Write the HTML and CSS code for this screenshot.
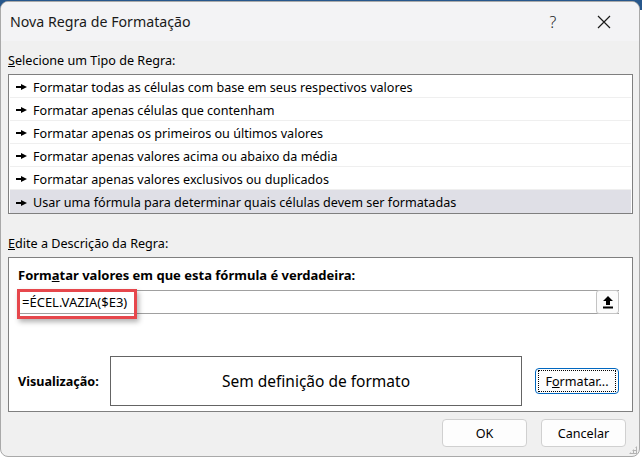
FILE: index.html
```html
<!DOCTYPE html>
<html lang="pt">
<head>
    <meta charset="UTF-8">
    <title>Nova Regra de Formatação</title>
    <link rel="stylesheet" href="styles.css">
</head>
<body>
    <div class="window">
        <div class="titlebar">
            <span class="title">Nova Regra de Formatação</span>
            <span class="help">?</span>
            <span class="close">
                <svg width="14" height="14" viewBox="0 0 14 14"><path d="M1 1L13 13M13 1L1 13" stroke="#1a1a1a" stroke-width="1.2"/></svg>
            </span>
        </div>

        <div class="content">
            <div class="group-label"><u>S</u>elecione um Tipo de Regra:</div>
            <ul class="rule-list">
                <li><span class="pointer"></span>Formatar todas as células com base em seus respectivos valores</li>
                <li><span class="pointer"></span>Formatar apenas células que contenham</li>
                <li><span class="pointer"></span>Formatar apenas os primeiros ou últimos valores</li>
                <li><span class="pointer"></span>Formatar apenas valores acima ou abaixo da média</li>
                <li><span class="pointer"></span>Formatar apenas valores exclusivos ou duplicados</li>
                <li class="selected"><span class="pointer"></span>Usar uma fórmula para determinar quais células devem ser formatadas</li>
            </ul>

            <div class="group-label second"><u>E</u>dite a Descrição da Regra:</div>
            <div class="desc-box">
                <div class="desc-title">Form<u>a</u>tar valores em que esta fórmula é verdadeira:</div>
                <div class="formula-field">
                    <span class="formula-text">=ÉCEL.VAZIA($E3)</span>
                    <span class="ref-btn">
                        <svg width="10" height="13" viewBox="0 0 10 13"><path d="M5 0L10 5H7V9H3V5H0Z" fill="#000"/><rect x="0" y="10.5" width="10" height="2" fill="#000"/></svg>
                    </span>
                    <div class="highlight"></div>
                </div>
                <div class="preview-row">
                    <span class="preview-label">Visualização:</span>
                    <div class="preview-box">Sem definição de formato</div>
                    <span class="btn format-btn"><span class="focus-ring">F<u>o</u>rmatar...</span></span>
                </div>
            </div>

            <div class="actions">
                <span class="btn">OK</span>
                <span class="btn">Cancelar</span>
            </div>
        </div>
        <div class="grip"></div>
    </div>
</body>
</html>
```

FILE: styles.css
```css
body {
    margin: 0;
    width: 642px;
    height: 458px;
    overflow: hidden;
    font-family: "Noto Sans", sans-serif;
    font-size: 12.6px;
    color: #000;
    background: linear-gradient(#27578c 0, #27578c 10px, #fff 10px);
}
.window {
    position: relative;
    width: 638px;
    height: 454px;
    margin-top: 1px;
    border: 1px solid #a9a9a9;
    border-radius: 8px;
    background-color: #f0f0f0;
    overflow: hidden;
}
.titlebar {
    display: flex;
    align-items: center;
    height: 39px;
    background-color: #f3f3f5;
}
.title {
    flex: 1;
    padding-left: 9px;
    font-size: 14.2px;
    color: #1a1a1a;
}
.help {
    width: 46px;
    text-align: center;
    font-size: 16px;
    font-weight: 300;
    color: #1a1a1a;
    margin-right: 5px;
}
.close {
    display: flex;
    justify-content: center;
    width: 46px;
    margin-right: 12px;
}
.content {
    padding: 0 6px 0 7px;
}
.group-label {
    line-height: 18px;
    margin-top: 11px;
}
.group-label.second {
    margin-top: 21px;
}
.rule-list {
    list-style: none;
    margin: 4px 0 0;
    padding: 0 1px;
    border: 1px solid #7f7f7f;
    box-shadow: inset 0 0 0 1px #fff;
    background-color: #fff;
}
.rule-list li {
    display: flex;
    align-items: center;
    box-sizing: border-box;
    height: 23px;
    padding-top: 2px;
    border-bottom: 1px solid #efefef;
    padding-left: 7px;
}
.rule-list li:last-child {
    border-bottom: 0;
}
.rule-list li.selected {
    background-color: #dfdfe6;
}
.pointer {
    width: 0;
    height: 0;
    border-top: 3px solid transparent;
    border-bottom: 3px solid transparent;
    border-left: 6px solid #000;
    margin-right: 6px;
    margin-left: 4px;
    position: relative;
}
.pointer::before {
    content: "";
    position: absolute;
    left: -11px;
    top: -1px;
    width: 5px;
    height: 2px;
    background-color: #000;
}
.desc-box {
    margin-top: 4px;
    height: 146px;
    padding: 7px 13px 0 9px;
    border: 1px solid #7f7f7f;
    background-color: #fff;
}
.desc-title {
    font-size: 13px;
    font-weight: bold;
    line-height: 18px;
    margin-top: 1px;
}
.formula-field {
    position: relative;
    display: flex;
    align-items: center;
    height: 22px;
    margin-top: 6px;
    border: 1px solid #a0a0a0;
    border-right: 0;
}
.formula-text {
    flex: 1;
    padding-left: 3px;
    font-size: 13px;
}
.ref-btn {
    display: flex;
    align-items: center;
    justify-content: center;
    width: 21px;
    height: 22px;
    border: 1px solid #c4c4c4;
    border-radius: 3px;
    background-color: #fbfbfb;
    margin-top: -1px;
    margin-bottom: -1px;
}
.highlight {
    position: absolute;
    left: -2px;
    top: -2px;
    width: 114px;
    height: 24px;
    border: 3px solid #e6474c;
    box-shadow: 2px 3px 5px rgba(0, 0, 0, 0.3);
}
.preview-row {
    display: flex;
    align-items: center;
    margin-top: 42px;
}
.preview-label {
    width: 92px;
    font-weight: bold;
}
.preview-box {
    width: 410px;
    height: 48px;
    border: 1px solid #646464;
    display: flex;
    align-items: center;
    justify-content: center;
    font-size: 15.5px;
}
.btn {
    display: flex;
    align-items: center;
    justify-content: center;
    box-sizing: border-box;
    width: 85px;
    height: 28px;
    border: 1px solid #d0d0d0;
    border-radius: 4px;
    background-color: #fdfdfd;
}
.format-btn {
    width: 84px;
    height: 26px;
    margin-left: 13px;
    border-color: #0067c0;
    padding: 2px;
}
.focus-ring {
    display: flex;
    align-items: center;
    justify-content: center;
    width: 100%;
    height: 100%;
    border: 1px dotted #000;
}
.actions {
    display: flex;
    justify-content: flex-end;
    gap: 14px;
    margin-top: 7px;
    margin-right: 7px;
}
.grip {
    position: absolute;
    right: 2px;
    bottom: 2px;
    width: 8px;
    height: 8px;
    background:
        radial-gradient(circle, #b4b4b4 1px, transparent 1.2px) 0 0 / 3px 3px;
    clip-path: polygon(100% 0, 100% 100%, 0 100%);
}
```
